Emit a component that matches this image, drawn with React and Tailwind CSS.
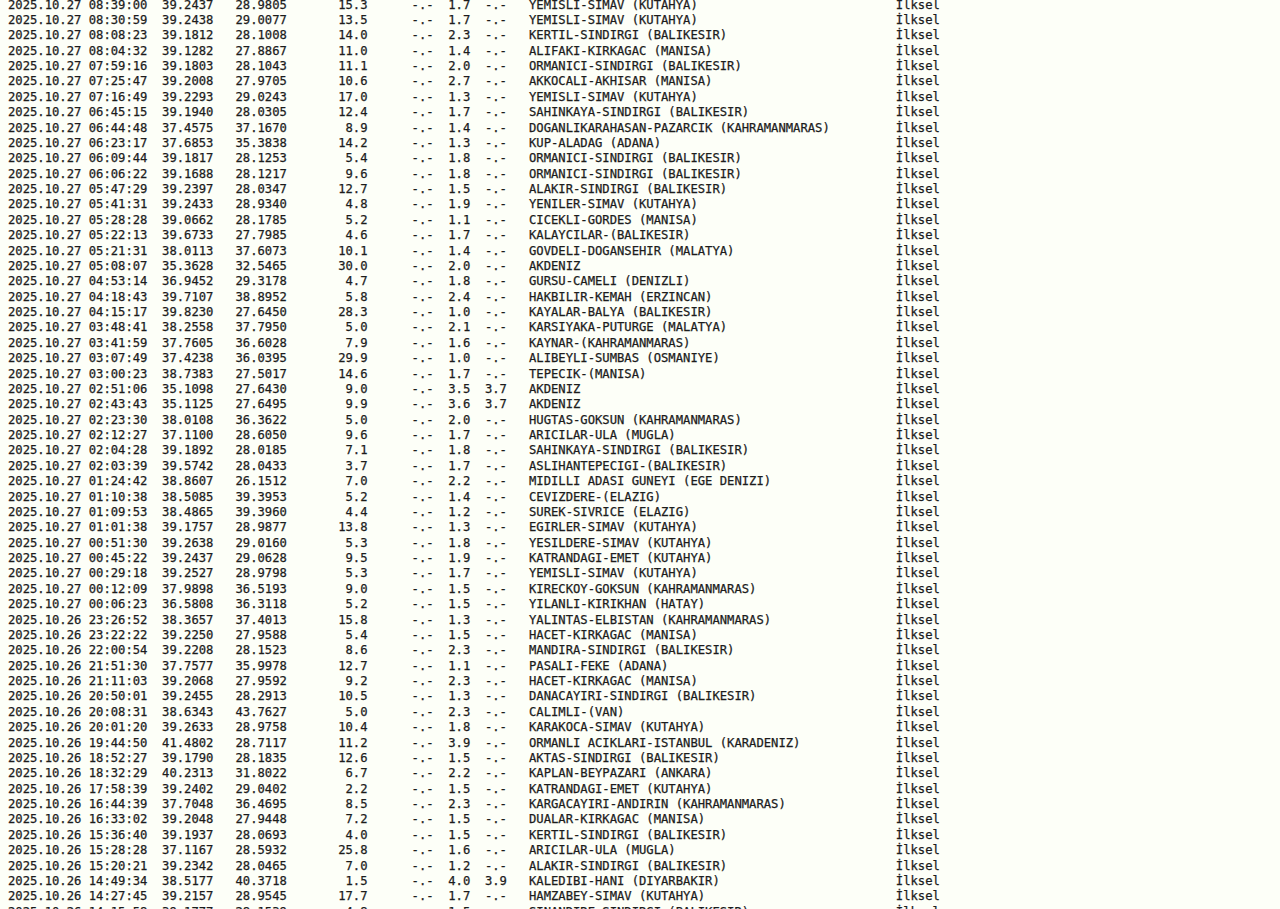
const S = 'YEMISLI-SIMAV (KUTAHYA)';
const B = 'SINDIRGI (BALIKESIR)';

// date time lat lon depth mag mw place
const rows = [
  ['27 08:39:00', '39.2437', '28.9805', '15.3', '1.7', '-.-', S],
  ['27 08:30:59', '39.2438', '29.0077', '13.5', '1.7', '-.-', S],
  ['27 08:08:23', '39.1812', '28.1008', '14.0', '2.3', '-.-', 'KERTIL-' + B],
  ['27 08:04:32', '39.1282', '27.8867', '11.0', '1.4', '-.-', 'ALIFAKI-KIRKAGAC (MANISA)'],
  ['27 07:59:16', '39.1803', '28.1043', '11.1', '2.0', '-.-', 'ORMANICI-' + B],
  ['27 07:25:47', '39.2008', '27.9705', '10.6', '2.7', '-.-', 'AKKOCALI-AKHISAR (MANISA)'],
  ['27 07:16:49', '39.2293', '29.0243', '17.0', '1.3', '-.-', S],
  ['27 06:45:15', '39.1940', '28.0305', '12.4', '1.7', '-.-', 'SAHINKAYA-' + B],
  ['27 06:44:48', '37.4575', '37.1670', '8.9', '1.4', '-.-', 'DOGANLIKARAHASAN-PAZARCIK (KAHRAMANMARAS)'],
  ['27 06:23:17', '37.6853', '35.3838', '14.2', '1.3', '-.-', 'KUP-ALADAG (ADANA)'],
  ['27 06:09:44', '39.1817', '28.1253', '5.4', '1.8', '-.-', 'ORMANICI-' + B],
  ['27 06:06:22', '39.1688', '28.1217', '9.6', '1.8', '-.-', 'ORMANICI-' + B],
  ['27 05:47:29', '39.2397', '28.0347', '12.7', '1.5', '-.-', 'ALAKIR-' + B],
  ['27 05:41:31', '39.2433', '28.9340', '4.8', '1.9', '-.-', 'YENILER-SIMAV (KUTAHYA)'],
  ['27 05:28:28', '39.0662', '28.1785', '5.2', '1.1', '-.-', 'CICEKLI-GORDES (MANISA)'],
  ['27 05:22:13', '39.6733', '27.7985', '4.6', '1.7', '-.-', 'KALAYCILAR-(BALIKESIR)'],
  ['27 05:21:31', '38.0113', '37.6073', '10.1', '1.4', '-.-', 'GOVDELI-DOGANSEHIR (MALATYA)'],
  ['27 05:08:07', '35.3628', '32.5465', '30.0', '2.0', '-.-', 'AKDENIZ'],
  ['27 04:53:14', '36.9452', '29.3178', '4.7', '1.8', '-.-', 'GURSU-CAMELI (DENIZLI)'],
  ['27 04:18:43', '39.7107', '38.8952', '5.8', '2.4', '-.-', 'HAKBILIR-KEMAH (ERZINCAN)'],
  ['27 04:15:17', '39.8230', '27.6450', '28.3', '1.0', '-.-', 'KAYALAR-BALYA (BALIKESIR)'],
  ['27 03:48:41', '38.2558', '37.7950', '5.0', '2.1', '-.-', 'KARSIYAKA-PUTURGE (MALATYA)'],
  ['27 03:41:59', '37.7605', '36.6028', '7.9', '1.6', '-.-', 'KAYNAR-(KAHRAMANMARAS)'],
  ['27 03:07:49', '37.4238', '36.0395', '29.9', '1.0', '-.-', 'ALIBEYLI-SUMBAS (OSMANIYE)'],
  ['27 03:00:23', '38.7383', '27.5017', '14.6', '1.7', '-.-', 'TEPECIK-(MANISA)'],
  ['27 02:51:06', '35.1098', '27.6430', '9.0', '3.5', '3.7', 'AKDENIZ'],
  ['27 02:43:43', '35.1125', '27.6495', '9.9', '3.6', '3.7', 'AKDENIZ'],
  ['27 02:23:30', '38.0108', '36.3622', '5.0', '2.0', '-.-', 'HUGTAS-GOKSUN (KAHRAMANMARAS)'],
  ['27 02:12:27', '37.1100', '28.6050', '9.6', '1.7', '-.-', 'ARICILAR-ULA (MUGLA)'],
  ['27 02:04:28', '39.1892', '28.0185', '7.1', '1.8', '-.-', 'SAHINKAYA-' + B],
  ['27 02:03:39', '39.5742', '28.0433', '3.7', '1.7', '-.-', 'ASLIHANTEPECIGI-(BALIKESIR)'],
  ['27 01:24:42', '38.8607', '26.1512', '7.0', '2.2', '-.-', 'MIDILLI ADASI GUNEYI (EGE DENIZI)'],
  ['27 01:10:38', '38.5085', '39.3953', '5.2', '1.4', '-.-', 'CEVIZDERE-(ELAZIG)'],
  ['27 01:09:53', '38.4865', '39.3960', '4.4', '1.2', '-.-', 'SUREK-SIVRICE (ELAZIG)'],
  ['27 01:01:38', '39.1757', '28.9877', '13.8', '1.3', '-.-', 'EGIRLER-SIMAV (KUTAHYA)'],
  ['27 00:51:30', '39.2638', '29.0160', '5.3', '1.8', '-.-', 'YESILDERE-SIMAV (KUTAHYA)'],
  ['27 00:45:22', '39.2437', '29.0628', '9.5', '1.9', '-.-', 'KATRANDAGI-EMET (KUTAHYA)'],
  ['27 00:29:18', '39.2527', '28.9798', '5.3', '1.7', '-.-', S],
  ['27 00:12:09', '37.9898', '36.5193', '9.0', '1.5', '-.-', 'KIRECKOY-GOKSUN (KAHRAMANMARAS)'],
  ['27 00:06:23', '36.5808', '36.3118', '5.2', '1.5', '-.-', 'YILANLI-KIRIKHAN (HATAY)'],
  ['26 23:26:52', '38.3657', '37.4013', '15.8', '1.3', '-.-', 'YALINTAS-ELBISTAN (KAHRAMANMARAS)'],
  ['26 23:22:22', '39.2250', '27.9588', '5.4', '1.5', '-.-', 'HACET-KIRKAGAC (MANISA)'],
  ['26 22:00:54', '39.2208', '28.1523', '8.6', '2.3', '-.-', 'MANDIRA-' + B],
  ['26 21:51:30', '37.7577', '35.9978', '12.7', '1.1', '-.-', 'PASALI-FEKE (ADANA)'],
  ['26 21:11:03', '39.2068', '27.9592', '9.2', '2.3', '-.-', 'HACET-KIRKAGAC (MANISA)'],
  ['26 20:50:01', '39.2455', '28.2913', '10.5', '1.3', '-.-', 'DANACAYIRI-' + B],
  ['26 20:08:31', '38.6343', '43.7627', '5.0', '2.3', '-.-', 'CALIMLI-(VAN)'],
  ['26 20:01:20', '39.2633', '28.9758', '10.4', '1.8', '-.-', 'KARAKOCA-SIMAV (KUTAHYA)'],
  ['26 19:44:50', '41.4802', '28.7117', '11.2', '3.9', '-.-', 'ORMANLI ACIKLARI-ISTANBUL (KARADENIZ)'],
  ['26 18:52:27', '39.1790', '28.1835', '12.6', '1.5', '-.-', 'AKTAS-' + B],
  ['26 18:32:29', '40.2313', '31.8022', '6.7', '2.2', '-.-', 'KAPLAN-BEYPAZARI (ANKARA)'],
  ['26 17:58:39', '39.2402', '29.0402', '2.2', '1.5', '-.-', 'KATRANDAGI-EMET (KUTAHYA)'],
  ['26 16:44:39', '37.7048', '36.4695', '8.5', '2.3', '-.-', 'KARGACAYIRI-ANDIRIN (KAHRAMANMARAS)'],
  ['26 16:33:02', '39.2048', '27.9448', '7.2', '1.5', '-.-', 'DUALAR-KIRKAGAC (MANISA)'],
  ['26 15:36:40', '39.1937', '28.0693', '4.0', '1.5', '-.-', 'KERTIL-' + B],
  ['26 15:28:28', '37.1167', '28.5932', '25.8', '1.6', '-.-', 'ARICILAR-ULA (MUGLA)'],
  ['26 15:20:21', '39.2342', '28.0465', '7.0', '1.2', '-.-', 'ALAKIR-' + B],
  ['26 14:49:34', '38.5177', '40.3718', '1.5', '4.0', '3.9', 'KALEDIBI-HANI (DIYARBAKIR)'],
  ['26 14:27:45', '39.2157', '28.9545', '17.7', '1.7', '-.-', 'HAMZABEY-SIMAV (KUTAHYA)'],
  ['26 14:15:58', '39.1777', '28.1539', '4.8', '1.5', '-.-', 'SINANDIRE-' + B],
];

const formatRow = ([stamp, lat, lon, depth, ml, mw, place]) =>
  `2025.10.${stamp}  ${lat}   ${lon}${depth.padStart(11)}      -.-  ${ml}  ${mw}   ${place.padEnd(50)}İlksel`;

export default function App() {
  return (
    <div className="h-screen overflow-hidden bg-[#fdfff8]">
      <pre className="-mt-[2.5px] pl-2 font-['DejaVu_Sans_Mono',monospace] text-[12.2px] leading-[15.38px] text-[#1c1c1c] [-webkit-text-stroke:0.25px_#1c1c1c]">
        {rows.map(formatRow).join('\n')}
      </pre>
    </div>
  );
}
